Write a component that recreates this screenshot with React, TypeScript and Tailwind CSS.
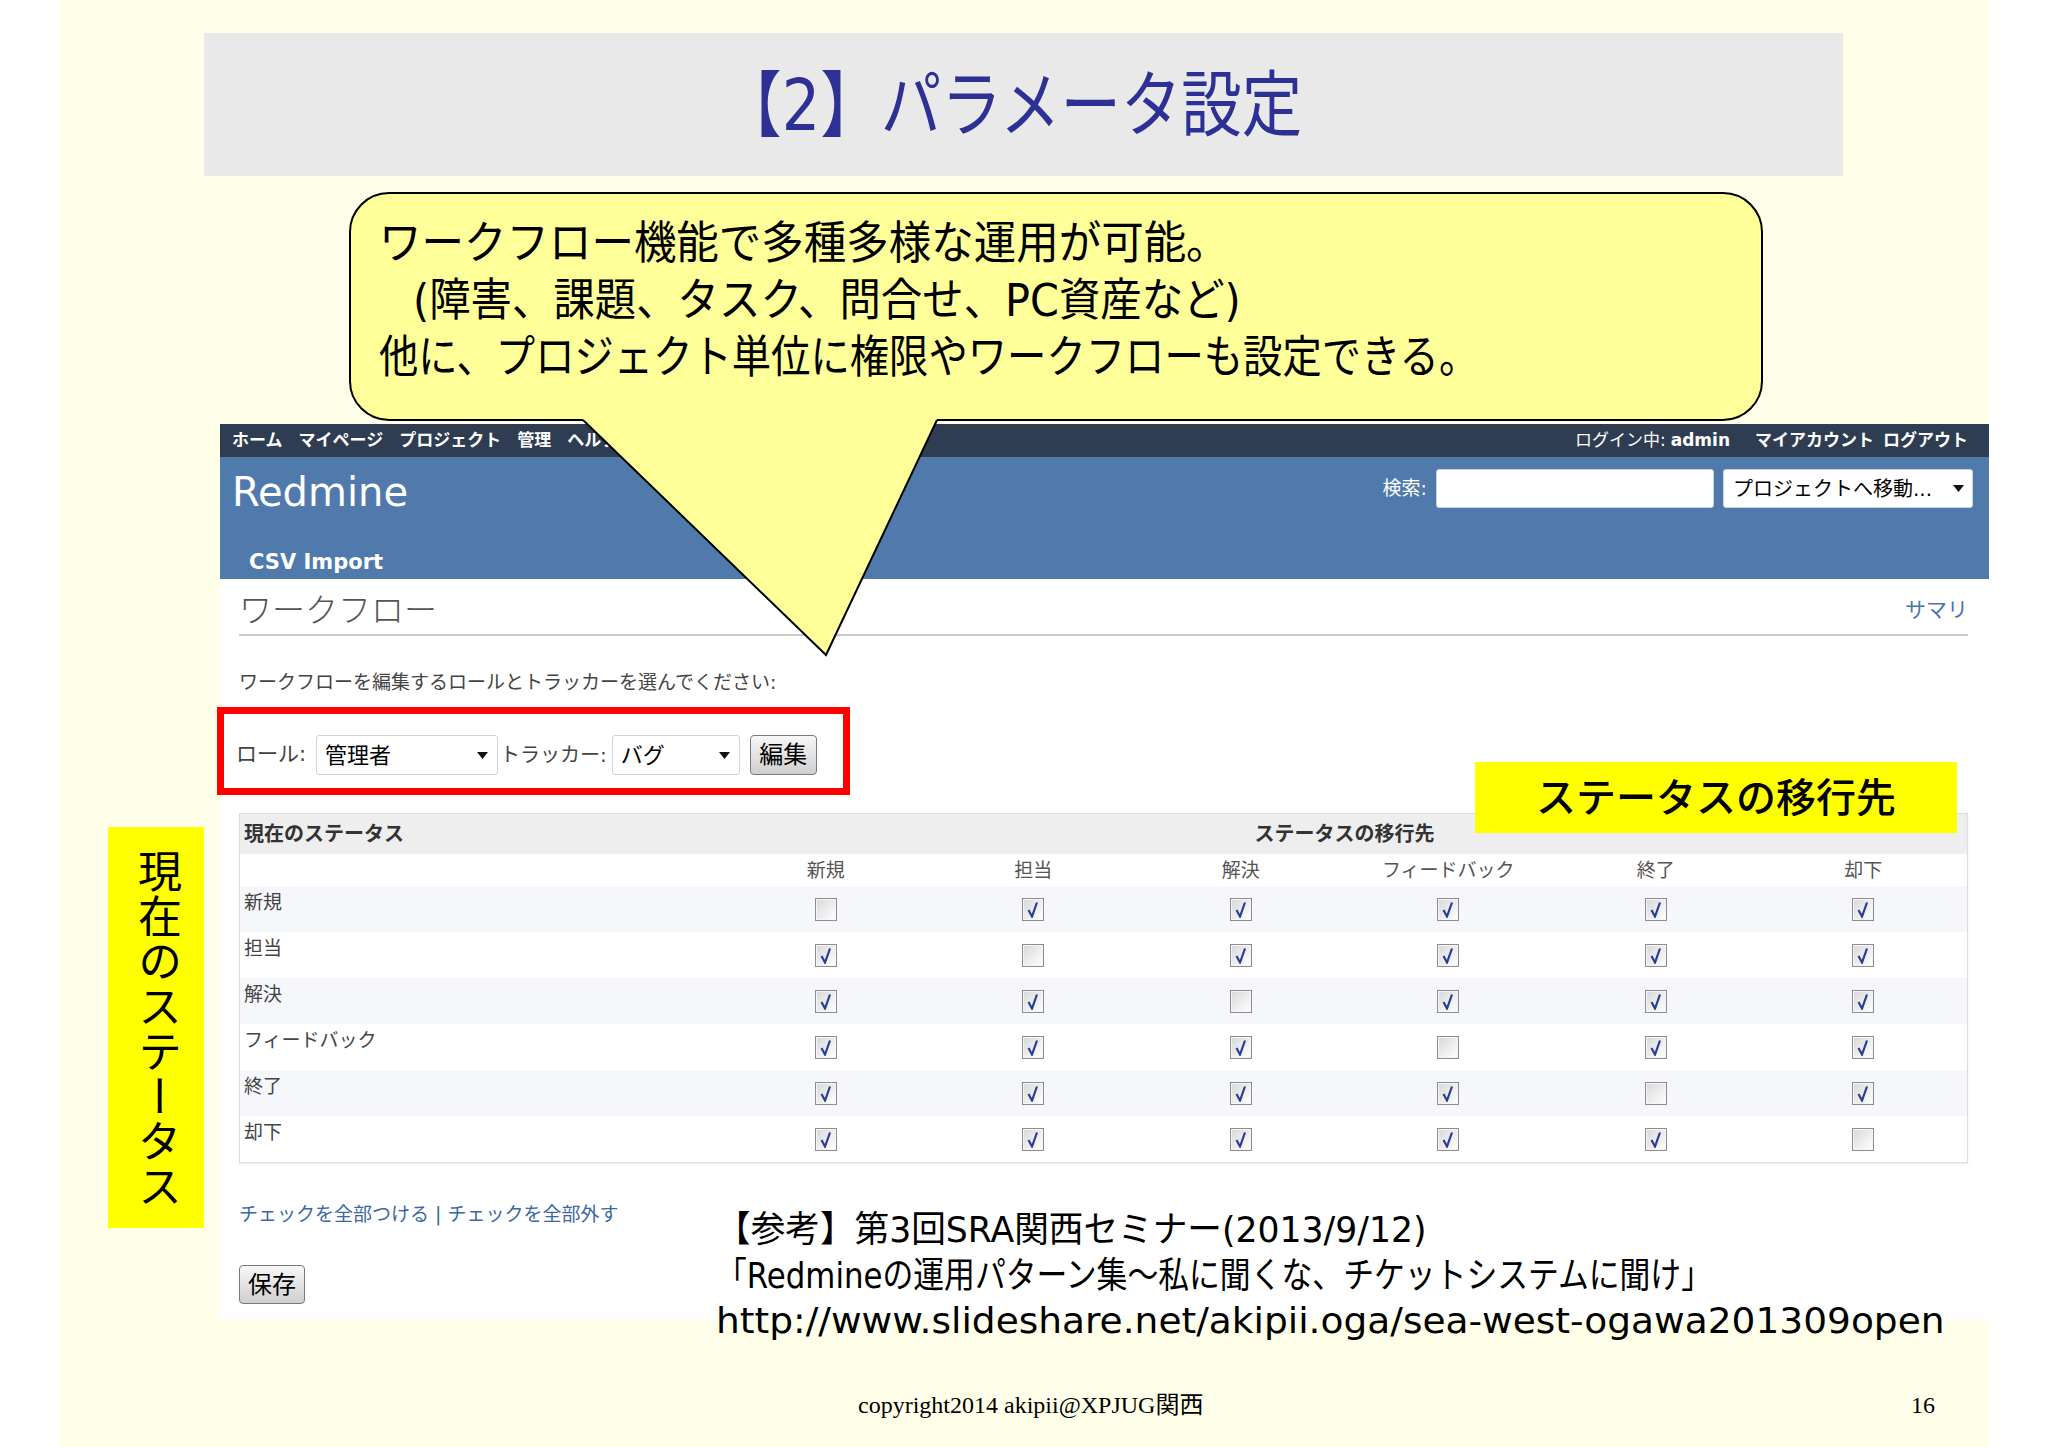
import React from "react";

const STATUSES = ["新規", "担当", "解決", "フィードバック", "終了", "却下"];

function Check({ on }: { on: boolean }) {
  return (
    <div className="w-[22px] h-[23px] border border-[#8b8d8f] bg-linear-to-br from-[#d6d7d8] via-[#ececec] to-white flex items-center justify-center shadow-[inset_0_0_0_1px_#f6f6f6]">
      {on && (
        <svg width="14" height="17" viewBox="0 0 14 17">
          <path d="M2.5 9 L6 15.5 L11 1.5" fill="none" stroke="#2a3c96" strokeWidth="2.2" />
        </svg>
      )}
    </div>
  );
}

function Arrow() {
  return (
    <svg width="11" height="7" viewBox="0 0 11 7">
      <path d="M0 0H11L5.5 7Z" fill="#111111" />
    </svg>
  );
}

export default function App() {
  return (
    <div className="w-[2048px] h-[1447px] bg-white overflow-hidden [font-family:'DejaVu_Sans','Noto_Sans_CJK_JP',sans-serif]">
      <div className="relative ml-[59px] w-[1930px] h-[1447px] bg-[#fffee8] flex flex-col items-start">
        {/* Title band */}
        <div className="ml-[145px] mt-[33px] w-[1639px] h-[143px] bg-[#e9e9e9] flex items-center justify-center">
          <span className="inline-block scale-x-[0.84] text-[72px] leading-none text-[#2d3094] whitespace-nowrap -translate-x-[12px]">
            【2】パラメータ設定
          </span>
        </div>

        {/* Callout */}
        <div className="ml-[290px] mt-[16px] w-[1414px] h-[229px] rounded-[40px] border-2 border-black bg-[#ffff99] pl-[28px] pt-[21px] text-[45px] leading-[57px] text-black">
          <div className="origin-left scale-x-[0.944] whitespace-nowrap">ワークフロー機能で多種多様な運用が可能。</div>
          <div className="origin-left scale-x-[0.92] whitespace-nowrap pl-[37px]">(障害、課題、タスク、問合せ、PC資産など)</div>
          <div className="origin-left scale-x-[0.874] whitespace-nowrap">他に、プロジェクト単位に権限やワークフローも設定できる。</div>
        </div>

        {/* Redmine screenshot */}
        <div className="ml-[161px] mt-[3px] w-[1769px] bg-white flex flex-col">
          <div className="h-[33px] bg-[#2e3d52] flex items-center justify-between pl-[12px] pr-[21px] text-[17px] font-bold text-white">
            <div className="flex gap-[16px]">
              <span>ホーム</span>
              <span>マイページ</span>
              <span>プロジェクト</span>
              <span>管理</span>
              <span>ヘルプ</span>
            </div>
            <div className="flex items-center">
              <span className="font-normal">ログイン中:</span>
              <span className="ml-[5px]">admin</span>
              <span className="ml-[25px]">マイアカウント</span>
              <span className="ml-[9px]">ログアウト</span>
            </div>
          </div>

          <div className="h-[122px] bg-[#507aab] flex flex-col justify-between">
            <div className="flex justify-between items-start pt-[11px] pl-[12px] pr-[16px]">
              <div className="text-[40px] leading-[48px] text-white">Redmine</div>
              <div className="flex items-center gap-[9px] mt-[1px]">
                <span className="text-[19px] text-white">検索:</span>
                <div className="w-[278px] h-[39px] bg-white rounded-[3px] border border-[#c9d3de]" />
                <div className="w-[250px] h-[39px] bg-white rounded-[3px] border border-[#c9d3de] flex items-center justify-between pl-[9px] pr-[8px] text-[20px] text-black">
                  <span>プロジェクトへ移動...</span>
                  <Arrow />
                </div>
              </div>
            </div>
            <div className="pl-[29px] pb-[4px] text-[21px] leading-[25px] font-bold text-white">CSV Import</div>
          </div>

          <div className="pl-[19px] pr-[21px] pt-[12px] pb-[15px] flex flex-col">
            <div className="flex items-center justify-between border-b-2 border-[#cccccc] pb-[3px]">
              <span className="text-[33px] leading-[40px] text-[#555555] font-light">ワークフロー</span>
              <span className="text-[21px] text-[#4d74a8]">サマリ</span>
            </div>
            <div className="mt-[33px] text-[19px] leading-[26px] text-[#444444]">
              ワークフローを編集するロールとトラッカーを選んでください:
            </div>
            <div className="mt-[40px] -ml-[3px] h-[40px] flex items-center text-[21px] text-[#444444]">
              <span>ロール:</span>
              <div className="ml-[10px] w-[182px] h-[40px] bg-white rounded-[3px] border border-[#d4d4d4] flex items-center justify-between pl-[8px] pr-[9px] text-[22px] text-black">
                <span>管理者</span>
                <Arrow />
              </div>
              <span className="ml-[2px] text-[20px]">トラッカー:</span>
              <div className="ml-[5px] w-[128px] h-[40px] bg-white rounded-[3px] border border-[#d4d4d4] flex items-center justify-between pl-[8px] pr-[9px] text-[22px] text-black">
                <span>バグ</span>
                <Arrow />
              </div>
              <div className="ml-[10px] w-[67px] h-[40px] rounded-[4px] border border-[#7a7a7a] bg-linear-to-b from-[#f7f7f7] to-[#cfcfcf] flex items-center justify-center text-[24px] text-black">
                編集
              </div>
            </div>

            {/* Table */}
            <div className="mt-[38px] border border-[#dddddd] shadow-[0_1px_2px_rgba(0,0,0,0.08)]">
              <div className="grid grid-cols-[482px_repeat(6,minmax(0,1fr))] h-[40px] bg-[#eeeeee] items-center text-[20px] font-bold text-[#333333]">
                <div className="pl-[4px]">現在のステータス</div>
                <div className="col-span-6 text-center">ステータスの移行先</div>
              </div>
              <div className="grid grid-cols-[482px_repeat(6,minmax(0,1fr))] h-[32px] items-center text-[19px] text-[#555555]">
                <div />
                {STATUSES.map((s) => (
                  <div key={s} className="text-center">
                    {s}
                  </div>
                ))}
              </div>
              {STATUSES.map((row, i) => (
                <div
                  key={row}
                  className={
                    i % 2 === 0
                      ? "grid grid-cols-[482px_repeat(6,minmax(0,1fr))] h-[46px] bg-[#f5f7fa]"
                      : "grid grid-cols-[482px_repeat(6,minmax(0,1fr))] h-[46px] bg-white"
                  }
                >
                  <div className="pl-[4px] pt-[3px] text-[19px] leading-[26px] text-[#444444]">{row}</div>
                  {STATUSES.map((col, j) => (
                    <div key={col} className="flex items-center justify-center">
                      <Check on={i !== j} />
                    </div>
                  ))}
                </div>
              ))}
            </div>

            <div className="mt-[38px] text-[19px] leading-[26px] text-[#3b67a3]">
              チェックを全部つける | チェックを全部外す
            </div>
            <div className="mt-[38px] self-start w-[66px] h-[39px] rounded-[4px] border border-[#7a7a7a] bg-linear-to-b from-[#f7f7f7] to-[#cfcfcf] flex items-center justify-center text-[24px] text-black">
              保存
            </div>
          </div>
        </div>

        {/* Footer */}
        <div className="mt-[71px] w-full flex items-center text-[24px] leading-[30px] text-black [font-family:'Liberation_Serif','Noto_Sans_CJK_JP',serif]">
          <span className="ml-[799px]">copyright2014 akipii@XPJUG関西</span>
          <span className="ml-auto mr-[54px]">16</span>
        </div>

        {/* Overlays */}
        <svg className="absolute left-[520px] top-[410px]" width="370" height="250" viewBox="0 0 370 250">
          <polygon points="4,0 358,0 358,10 247,245 4,10" fill="#ffff99" />
          <polyline points="4,10 247,245 358,10" fill="none" stroke="#000000" strokeWidth="2" />
        </svg>

        <div className="absolute left-[49px] top-[827px] w-[96px] h-[401px] bg-[#ffff00] flex justify-center pt-[22px]">
          <span className="[writing-mode:vertical-rl] text-[44px] leading-none tracking-[1px] text-black">
            現在のステータス
          </span>
        </div>

        <div className="absolute left-[158px] top-[707px] w-[633px] h-[88px] border-[7px] border-[#ff0000]" />

        <div className="absolute left-[1416px] top-[762px] w-[482px] h-[71px] bg-[#ffff00] flex items-center justify-center text-[40px] font-medium text-black">
          ステータスの移行先
        </div>

        <div className="absolute left-[657px] top-[1207px] text-[36px] leading-[45.5px] text-black whitespace-nowrap">
          <div className="origin-left scale-x-[0.962]">【参考】第3回SRA関西セミナー(2013/9/12)</div>
          <div className="origin-left scale-x-[0.856]">「Redmineの運用パターン集〜私に聞くな、チケットシステムに聞け」</div>
          <div className="origin-left scale-x-[1.042]">http://www.slideshare.net/akipii.oga/sea-west-ogawa201309open</div>
        </div>
      </div>
    </div>
  );
}
